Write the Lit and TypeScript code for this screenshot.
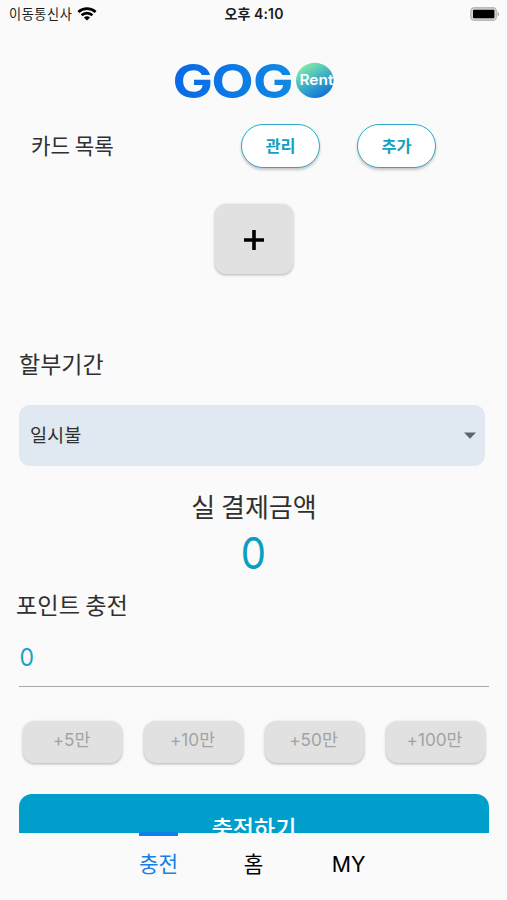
import { LitElement, html, css, svg } from "lit";
import { customElement, state } from "lit/decorators.js";
import { classMap } from "lit/directives/class-map.js";

const TABS = ["충전", "홈", "MY"];
const AMOUNTS = ["+5만", "+10만", "+50만", "+100만"];

@customElement("status-bar")
class StatusBar extends LitElement {
  static styles = css`
    :host { display: grid; grid-template-columns: 1fr auto 1fr; align-items: center; height: 27px; padding: 0 7px 0 9px; box-sizing: border-box; color: #1c1c1c; }
    .carrier { display: flex; align-items: center; gap: 5px; font-size: 13.2px; line-height: 26px; height: 27px; }
    .carrier span { letter-spacing: 0.55px; }
    .time { font-size: 14px; line-height: 28px; font-weight: 600; font-family: "Inter", "Noto Sans CJK KR", sans-serif; letter-spacing: 0.1px; margin-right: 1px; }
    .battery { justify-self: end; }
    svg { display: block; }
  `;
  render() {
    return html`
      <div class="carrier">
        <span>이동통신사</span>
        <svg width="20" height="14" viewBox="0 0 20 14">
          <g fill="none" stroke="#000" stroke-width="2.7">
            <path d="M1.4 4.9C6.2 .5 13.8 .5 18.6 4.9" />
            <path d="M4.6 8.3C7.6 5.4 12.4 5.4 15.4 8.3" />
          </g>
          <path d="M6.9 10.4C8.7 8.8 11.3 8.8 13.1 10.4L10 13.5Z" fill="#000" />
        </svg>
      </div>
      <div class="time">오후 4:10</div>
      <svg class="battery" width="31" height="15" viewBox="0 0 31 15">
        <rect x="1.8" y=".7" width="25.6" height="12.6" rx="3.6" fill="#d4d4d4" stroke="#b9b9b9" stroke-width="1.4" />
        <rect x="4" y="2.7" width="21.4" height="8.6" rx="1" fill="#000" />
        <path d="M28.6 4.7C30.6 5.5 30.6 8.5 28.6 9.3Z" fill="#aaa" />
      </svg>
    `;
  }
}

@customElement("brand-logo")
class BrandLogo extends LitElement {
  static styles = css`
    :host { display: block; }
    svg { display: block; margin: 0 auto; }
    .word { font: 700 47px "Inter", sans-serif; }
    .rent { font: 600 14px "Inter", sans-serif; }
  `;
  render() {
    return html`
      <svg width="166" height="64" viewBox="-2 -12 166 64">
        <defs>
          <linearGradient id="word" gradientUnits="userSpaceOnUse" x1="0" y1="0" x2="120" y2="0">
            <stop offset="0" stop-color="#0a69e6" />
            <stop offset="1" stop-color="#1089e4" />
          </linearGradient>
          <linearGradient id="ball" x1="0.2" y1="0.05" x2="0.75" y2="0.95">
            <stop offset="0" stop-color="#86eca6" />
            <stop offset="0.5" stop-color="#3fb2c4" />
            <stop offset="1" stop-color="#0f70dc" />
          </linearGradient>
        </defs>
        ${svg`
          <g class="word" fill="url(#word)">
            <text x="-.6" y="37.6" textLength="40.5" lengthAdjust="spacingAndGlyphs">G</text>
            <text x="38.2" y="37.6" textLength="42.5" lengthAdjust="spacingAndGlyphs">O</text>
            <text x="79.9" y="37.6" textLength="40.5" lengthAdjust="spacingAndGlyphs">G</text>
          </g>
          <ellipse cx="141.8" cy="20.4" rx="18.8" ry="17.6" fill="url(#ball)" />
          <text class="rent" x="126.4" y="25.4" textLength="34" lengthAdjust="spacingAndGlyphs" fill="#fff">Rent</text>
        `}
      </svg>
    `;
  }
}

@customElement("app-root")
class AppRoot extends LitElement {
  @state() tab = 0;

  static styles = css`
    :host { display: flex; flex-direction: column; height: 900px; background: #fafafa; color: #303030; overflow: hidden; font-family: "Inter", "Noto Sans CJK KR", sans-serif; }
    button { font: inherit; border: 0; padding: 0; margin: 0; box-sizing: border-box; }
    .content { flex: none; height: 806px; overflow: hidden; display: flex; flex-direction: column; }
    .content > * { flex: none; }
    .logo { margin-top: 21px; height: 64px; }
    .cards { display: flex; align-items: center; height: 44px; margin-top: 12px; padding-left: 31px; font-family: "Noto Sans CJK KR", sans-serif; }
    .cards-title { flex: none; width: 210px; font-size: 21.2px; line-height: 41px; height: 44px; }
    .pill { width: 79px; height: 44px; border-radius: 22px; border: 1.5px solid #30a9c8; background: #fff; color: #159fc2; font-size: 16.3px; font-weight: 700; line-height: 39px; padding-bottom: 2px; margin-right: 37px; box-shadow: 0 2px 3px rgba(0, 0, 0, 0.22); }
    .add { display: grid; place-items: center; align-self: center; width: 78px; height: 70px; margin-top: 36px; border-radius: 11px; background: #e1e1e1; box-shadow: 0 1px 3px rgba(0, 0, 0, 0.3); }
    .add svg { margin-top: 1px; }
    .period { margin: 75px 0 0 19px; height: 31px; font-size: 23px; line-height: 32px; }
    .select { display: flex; align-items: center; justify-content: space-between; margin: 25px 22px 0 19px; height: 61px; padding: 0 9px 0 11px; border-radius: 11px; background: #e0e8f1; box-sizing: border-box; font-size: 18.6px; line-height: 60px; }
    .select span { height: 62px; }
    .pay { text-align: center; margin: 22px 0 0 1px; height: 36px; font-size: 26px; line-height: 36px; font-family: "Noto Sans CJK KR", sans-serif; }
    .total { text-align: center; height: 54px; font-size: 43.5px; line-height: 59px; color: #0c9dc2; transform: scaleX(0.92); }
    .points { margin: 8px 0 0 16px; height: 34px; font-size: 23.2px; line-height: 36px; font-family: "Noto Sans CJK KR", sans-serif; }
    .field { margin: 18px 18px 0 19px; height: 48px; border-bottom: 1.5px solid #a8a8a8; color: #1aa2c5; font-size: 24.5px; line-height: 39px; }
    .field span { display: inline-block; transform: scaleX(0.94); }
    .amounts { display: grid; grid-template-columns: repeat(4, 99px); gap: 22px; margin: 34px 0 0 23px; }
    .amount { height: 42px; border-radius: 12px; background: #e1e1e1; color: #a3a3a3; font-size: 17.2px; line-height: 36px; padding: 0 2px 5px 0; box-shadow: 0 1px 3px rgba(0, 0, 0, 0.3); }
    .charge { margin: 31px 18px 0 19px; height: 70px; border-radius: 13px; background: #009fcb; color: #fff; font-size: 23px; line-height: 70px; font-weight: 500; }
    .tabs { flex: 1; display: grid; grid-template-columns: 39px 39px 39px; column-gap: 56px; justify-content: start; align-items: start; padding-left: 139px; margin-top: -1px; }
    .tab { border-top: 4px solid transparent; height: 61px; text-align: center; font-size: 21.3px; line-height: 57px; color: #000; white-space: nowrap; background: none; }
    .tab.active { color: #1b7ee6; border-color: #0d80ea; }
  `;

  render() {
    return html`
      <status-bar></status-bar>
      <div class="content">
        <brand-logo class="logo"></brand-logo>
        <div class="cards">
          <div class="cards-title">카드 목록</div>
          <button class="pill">관리</button>
          <button class="pill">추가</button>
        </div>
        <button class="add" aria-label="카드 추가">
          <svg width="20" height="20" viewBox="0 0 20 20"><path d="M10 0V20M0 10H20" stroke="#000" stroke-width="3.6" /></svg>
        </button>
        <div class="period">할부기간</div>
        <div class="select">
          <span>일시불</span>
          <svg width="12" height="7" viewBox="0 0 12 7"><path d="M0 .5H12L6 6.8Z" fill="#5c656c" /></svg>
        </div>
        <div class="pay">실 결제금액</div>
        <div class="total">0</div>
        <div class="points">포인트 충전</div>
        <div class="field"><span>0</span></div>
        <div class="amounts">${AMOUNTS.map((a) => html`<button class="amount">${a}</button>`)}</div>
        <button class="charge">충전하기</button>
      </div>
      <div class="tabs">
        ${TABS.map((t, i) => html`<button class=${classMap({ tab: true, active: i === this.tab })} @click=${() => (this.tab = i)}>${t}</button>`)}
      </div>
    `;
  }
}
